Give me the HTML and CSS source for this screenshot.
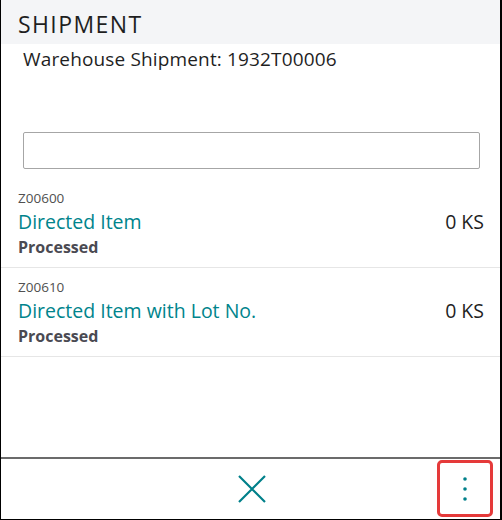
FILE: index.html
```html
<!DOCTYPE html>
<html>
<head>
<meta charset="utf-8">
<link rel="stylesheet" href="styles.css">
</head>
<body>
<div class="app">
  <div class="header">SHIPMENT</div>
  <div class="subtitle">Warehouse Shipment: 1932T00006</div>
  <div class="search-wrap"><div class="search"></div></div>
  <div class="list">
    <div class="item">
      <div class="info">
        <div class="code">Z00600</div>
        <div class="name">Directed Item</div>
        <div class="status">Processed</div>
      </div>
      <div class="qty">0 KS</div>
    </div>
    <div class="item">
      <div class="info">
        <div class="code">Z00610</div>
        <div class="name">Directed Item with Lot No.</div>
        <div class="status">Processed</div>
      </div>
      <div class="qty">0 KS</div>
    </div>
  </div>
  <div class="footer">
    <div class="close">
      <svg width="28" height="28" viewBox="0 0 28 28"><path d="M1 1 L27 27 M27 1 L1 27" stroke="#00808a" stroke-width="2.2" fill="none"/></svg>
    </div>
    <div class="more">
      <svg width="6" height="26" viewBox="0 0 6 26"><circle cx="3" cy="3" r="1.8" fill="#00808a"/><circle cx="3" cy="13" r="1.8" fill="#00808a"/><circle cx="3" cy="23" r="1.8" fill="#00808a"/></svg>
    </div>
  </div>
</div>
</body>
</html>
```
FILE: styles.css
```css
* { box-sizing: border-box; }
html, body { margin: 0; padding: 0; background: #fff; }
body { font-family: "Open Sans", "Noto Sans", sans-serif; color: #212121; }
.app {
  width: 502px;
  height: 520px;
  border-left: 1px solid #000;
  border-right: 2px solid #000;
  border-bottom: 1px solid #000;
  display: flex;
  flex-direction: column;
}
.header {
  height: 44px;
  background: #f4f5f7;
  padding-left: 17px;
  font-size: 23px;
  letter-spacing: 1.4px;
  line-height: 48px;
  color: #1f1f1f;
}
.subtitle {
  padding-left: 22px;
  font-size: 19px;
  letter-spacing: 0.15px;
  line-height: 30px;
  color: #1f1f1f;
}
.search-wrap {
  padding: 58px 20px 0 22px;
}
.search {
  height: 37px;
  border: 1px solid #a6a6a6;
  border-radius: 2px;
  background: #fff;
}
.list { flex: 1; padding-top: 10px; }
.item {
  display: flex;
  justify-content: space-between;
  align-items: flex-start;
  padding: 10px 16px 0 17px;
  height: 89px;
  border-bottom: 1px solid #e6e6e6;
}
.code { font-size: 13.5px; color: #505050; line-height: 18px; }
.name { font-size: 19.5px; color: #00848c; line-height: 26px; margin-top: 2px; }
.status { font-size: 16px; font-weight: 700; color: #4a4a52; line-height: 24px; }
.qty { font-size: 19.5px; color: #1f1f1f; line-height: 26px; margin-top: 20px; }
.footer {
  height: 62px;
  border-top: 2px solid #6b6b6b;
  display: flex;
  align-items: center;
  position: relative;
}
.close {
  flex: 1;
  display: flex;
  justify-content: center;
  padding-left: 2px;
}
.close svg { display: block; }
.more {
  position: absolute;
  right: 7px;
  top: 1px;
  width: 56px;
  height: 57px;
  border: 3px solid #e53a3a;
  border-radius: 5px;
  display: flex;
  align-items: center;
  justify-content: center;
}
.more svg { display: block; }
```
